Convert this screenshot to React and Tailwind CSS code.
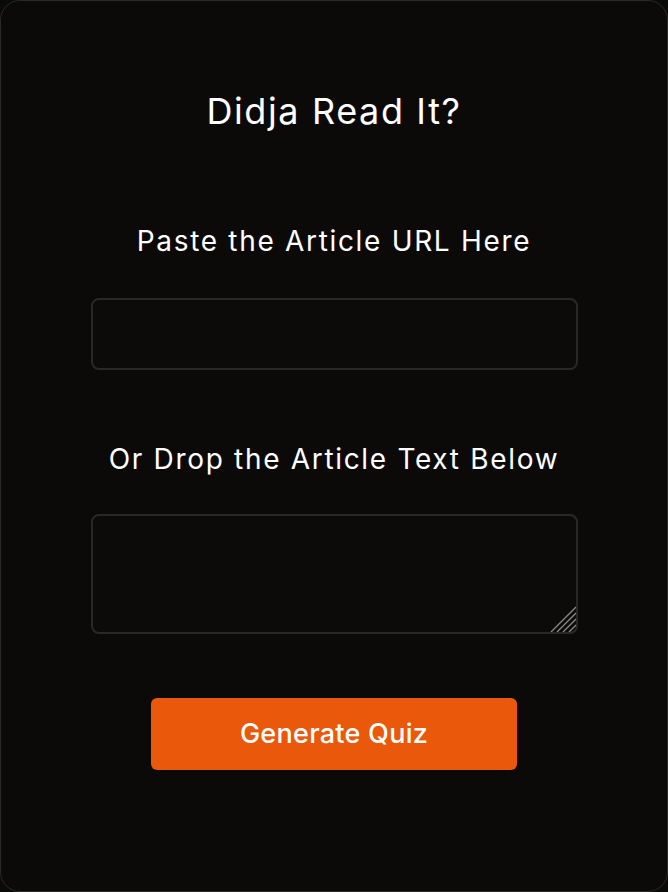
import React from 'react';

const ResizeGrip = () => (
  <svg
    className="pointer-events-none absolute right-[2px] bottom-[2px]"
    width="26"
    height="26"
    viewBox="0 0 26 26"
    fill="none"
    stroke="#8a8988"
    strokeWidth="1.3"
  >
    <path d="M26 1 L1 26" />
    <path d="M26 7 L7 26" />
    <path d="M26 13 L13 26" />
    <path d="M26 19 L19 26" />
  </svg>
);

const App = () => {
  return (
    <div className="w-[668px] h-[892px] bg-[#0a0a09] font-['Inter',sans-serif] text-white">
      <div className="h-full rounded-[20px] border border-[#2a2928] bg-[#0b0a09] flex flex-col items-center">
        <h1 className="mt-[86px] text-[36px] leading-[48px] font-normal tracking-[0.045em]">Didja Read It?</h1>

        <label className="mt-[88px] text-[28px] leading-[36px] tracking-[0.06em]">Paste the Article URL Here</label>
        <input
          type="text"
          className="mt-[39px] w-[487px] h-[72px] rounded-lg border-2 border-[#292827] bg-[#0c0b0a] px-4 text-xl text-white outline-none"
        />

        <label className="mt-[71px] text-[28px] leading-[36px] tracking-[0.06em]">Or Drop the Article Text Below</label>
        <div className="relative mt-[37px] w-[487px] h-[120px]">
          <textarea className="block w-full h-full resize-none rounded-lg border-2 border-[#292827] bg-[#0c0b0a] px-4 py-2 text-xl text-white outline-none" />
          <ResizeGrip />
        </div>

        <button className="mt-[64px] w-[366px] h-[72px] rounded-md bg-[#ea580c] text-[27px] font-medium tracking-[0.01em] text-white">
          Generate Quiz
        </button>
      </div>
    </div>
  );
};

export default App;
